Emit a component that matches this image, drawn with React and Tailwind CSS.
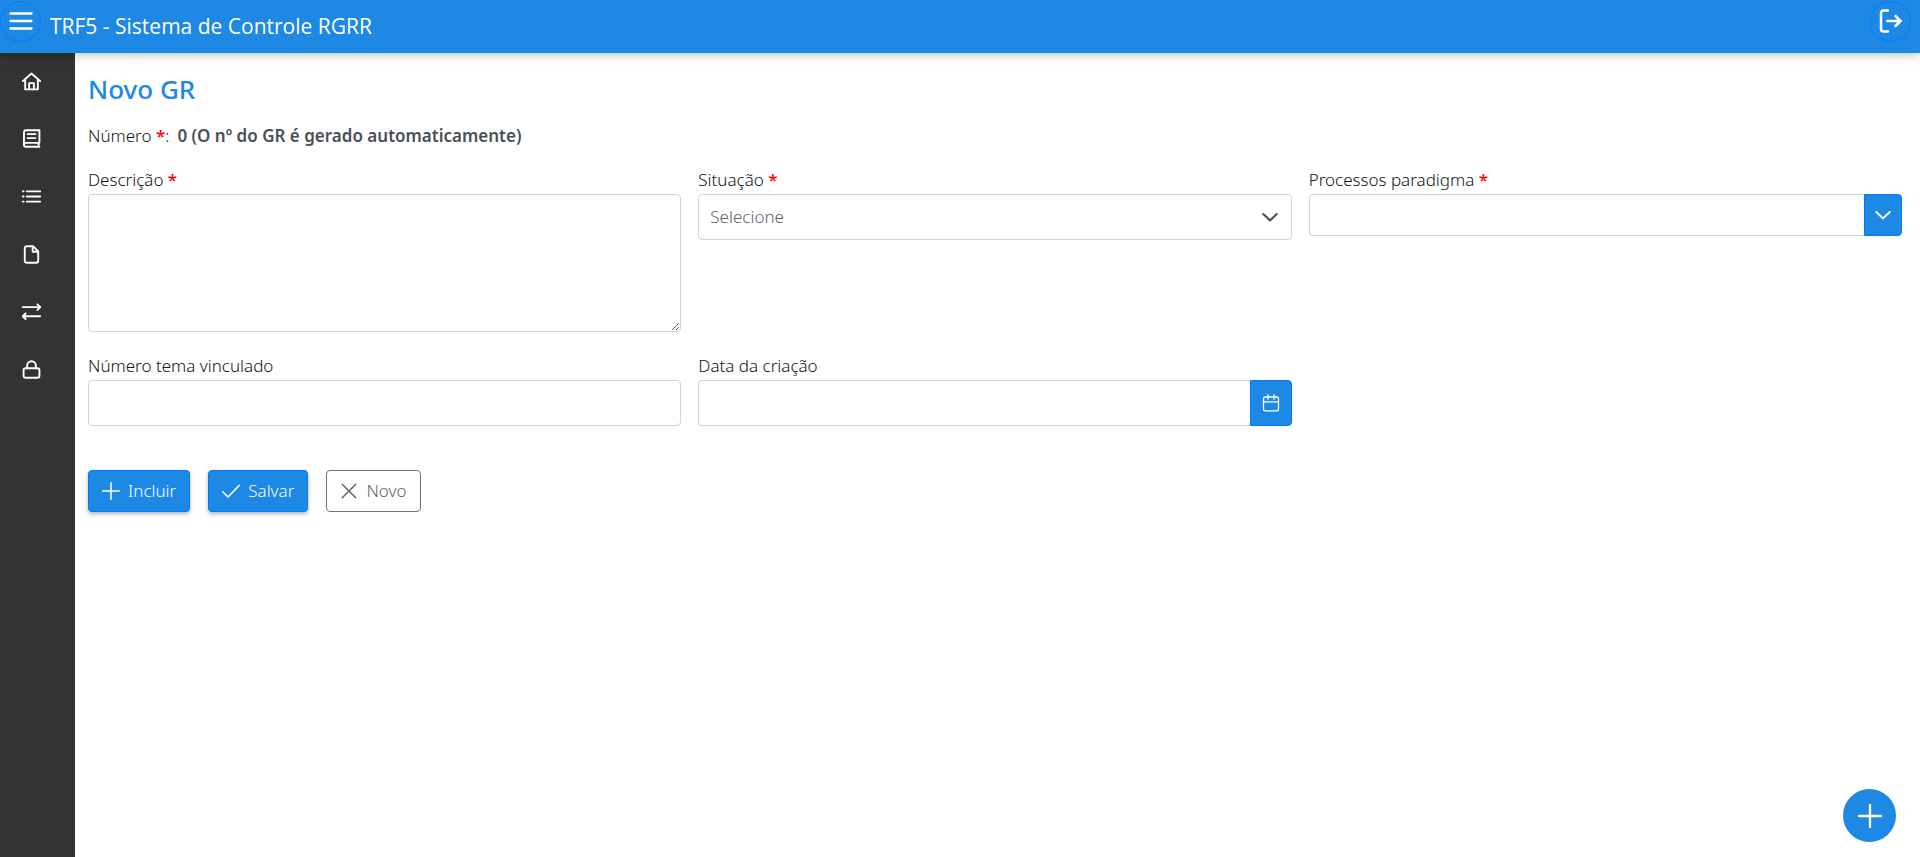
import { useState } from 'react';
import clsx from 'clsx';

const ICONS = {
    bars: ['M1.5 4.5h21', 'M1.5 12h21', 'M1.5 19.5h21'],
    signOut: ['M10 1.5H5.5A2.5 2.5 0 0 0 3 4v16A2.5 2.5 0 0 0 5.5 22.5H10', 'M9.5 12h13', 'M17.5 7l5 5-5 5'],
    home: ['M1 11.5L12 2l11 9.5', 'M4 9.5V22h16V9.5', 'M9 22v-8h6v8'],
    book: ['M22 17.5V1.5H5A2.5 2.5 0 0 0 2.5 4v16A2.5 2.5 0 0 0 5 22.5h17', 'M2.5 19.5A2 2 0 0 1 4.5 17.5H21V22', 'M7 6.5h10', 'M7 11.5h10'],
    list: ['M6 5.5h17', 'M6 12h17', 'M6 18.5h17', 'M1 5.5h1', 'M1 12h1', 'M1 18.5h1'],
    file: ['M14 1.5H6A2.5 2.5 0 0 0 3.5 4v16A2.5 2.5 0 0 0 6 22.5h12a2.5 2.5 0 0 0 2.5-2.5V8z', 'M13.5 2v6.5h6.5'],
    exchange: ['M1 6.5h22', 'M19.5 3L23 6.5l-3.5 3.5', 'M23 18H1', 'M4.5 14.5L1 18l3.5 3.5'],
    lock: ['M4.5 10.5h15a2.5 2.5 0 0 1 2.5 2.5v7a2.5 2.5 0 0 1-2.5 2.5h-15A2.5 2.5 0 0 1 2 20v-7a2.5 2.5 0 0 1 2.5-2.5z', 'M6.5 10.5V7a5.5 5.5 0 0 1 11 0v3.5'],
    chevron: ['M3 8l9 8.5L21 8'],
    calendar: ['M4.5 4h15A2.5 2.5 0 0 1 22 6.5V20a2.5 2.5 0 0 1-2.5 2.5h-15A2.5 2.5 0 0 1 2 20V6.5A2.5 2.5 0 0 1 4.5 4z', 'M2 10.5h20', 'M8 1v6', 'M16 1v6'],
    plus: ['M12 1v22', 'M1 12h22'],
    check: ['M1 13l7 7L23 4.5'],
    times: ['M3 3l18 18', 'M21 3L3 21']
};

const MENU = [
    { icon: 'home', label: 'Início' },
    { icon: 'book', label: 'Cadastros' },
    { icon: 'list', label: 'Listas' },
    { icon: 'file', label: 'Documentos' },
    { icon: 'exchange', label: 'Movimentações' },
    { icon: 'lock', label: 'Segurança' }
];

function Icon({ name, className, stroke = 2 }) {
    return (
        <svg
            viewBox="0 0 24 24"
            fill="none"
            stroke="currentColor"
            strokeWidth={stroke}
            strokeLinecap="round"
            strokeLinejoin="round"
            className={clsx('shrink-0', className)}
            aria-hidden="true"
        >
            {ICONS[name].map((d) => (
                <path key={d} d={d} />
            ))}
        </svg>
    );
}

function Field({ id, label, required, children }) {
    return (
        <div>
            <label htmlFor={id} className="block h-[26px] leading-6">
                {label} {required && <span className="font-medium text-[#ff0000]">*</span>}
            </label>
            {children}
        </div>
    );
}

const inputClass = 'block w-full min-w-0 rounded border border-[#ced4da] bg-white px-[11px] outline-none focus:border-[#1e88e5]';
const addonClass = 'flex shrink-0 items-center justify-center rounded-r border border-[#007bff] bg-[#1e88e5] text-white';
const buttonClass = 'flex h-[42px] items-center gap-2 rounded border px-[13px]';
const primaryClass = 'border-[#007bff] bg-[#1e88e5] text-white shadow-[0_2px_4px_rgba(0,0,0,0.3)]';

export default function App() {
    const [form, setForm] = useState({ descricao: '', situacao: '', processos: '', tema: '', data: '' });

    const bind = (name) => ({
        id: name,
        value: form[name],
        onChange: (e) => setForm((prev) => ({ ...prev, [name]: e.target.value }))
    });

    return (
        <div className="flex min-h-screen flex-col bg-white font-['Noto_Sans',sans-serif] text-[17px] font-light text-[#111417]">
            {/* Topbar */}
            <header className="z-10 flex h-[53px] items-start bg-[#1e88e5] pt-px pr-[9px] text-white shadow-[0_2px_10px_rgba(0,0,0,0.25)]">
                <button className="flex size-[41px] items-center justify-center rounded-full border border-[#007bff] pb-0.5" aria-label="Menu">
                    <Icon name="bars" stroke={2.3} className="size-6" />
                </button>
                <span className="ml-[9px] flex-1 self-center font-['Open_Sans',sans-serif] text-[21px] font-normal">TRF5 - Sistema de Controle RGRR</span>
                <button className="flex size-[41px] items-center justify-center rounded-full border border-[#007bff] pr-0.5 pb-0.5" aria-label="Sair">
                    <Icon name="signOut" stroke={2.5} className="size-6" />
                </button>
            </header>

            <div className="flex flex-1">
                {/* Sidebar */}
                <nav className="w-[75px] shrink-0 bg-[#333333] text-white">
                    <ul className="grid h-[346px] grid-rows-6">
                        {MENU.map((item) => (
                            <li key={item.icon}>
                                <a href="#" aria-label={item.label} className="flex h-full items-center pb-px pl-[22px]">
                                    <Icon name={item.icon} stroke={2.4} className="size-[19px]" />
                                </a>
                            </li>
                        ))}
                    </ul>
                </nav>

                {/* Form */}
                <main className="min-w-0 flex-1 pt-5 pr-[18px] pl-[13px]">
                    <h1 className="text-[26px] leading-8 font-medium text-[#1e88e5]">Novo GR</h1>
                    <p className="mt-[19px] leading-6">
                        Número <span className="font-medium text-[#ff0000]">*</span>:
                        <strong className="ml-2 font-semibold text-[#495057]">0 (O nº do GR é gerado automaticamente)</strong>
                    </p>

                    <div className="mt-5 grid grid-cols-3 items-start gap-x-[17px] gap-y-[22px]">
                        <Field id="descricao" label="Descrição" required>
                            <textarea {...bind('descricao')} className={clsx(inputClass, 'h-[138px] py-2 text-[#495057]')} />
                        </Field>

                        <Field id="situacao" label="Situação" required>
                            <div className="relative">
                                <select {...bind('situacao')} className={clsx(inputClass, 'h-[46px] appearance-none text-[#5c646c]')}>
                                    <option value="">Selecione</option>
                                    <option value="ativo">Ativo</option>
                                    <option value="inativo">Inativo</option>
                                </select>
                                <Icon name="chevron" stroke={2.8} className="pointer-events-none absolute top-3.5 right-[13px] size-[18px] text-[#495057]" />
                            </div>
                        </Field>

                        <Field id="processos" label="Processos paradigma" required>
                            <div className="flex">
                                <input type="text" {...bind('processos')} className={clsx(inputClass, 'h-[42px] rounded-r-none border-r-0 text-[#495057]')} />
                                <button className={clsx(addonClass, 'w-[38px]')} aria-label="Abrir processos">
                                    <Icon name="chevron" stroke={2.6} className="size-[18px]" />
                                </button>
                            </div>
                        </Field>

                        <Field id="tema" label="Número tema vinculado">
                            <input type="text" {...bind('tema')} className={clsx(inputClass, 'h-[46px] text-[#495057]')} />
                        </Field>

                        <Field id="data" label="Data da criação">
                            <div className="flex">
                                <input type="text" {...bind('data')} className={clsx(inputClass, 'h-[46px] rounded-r-none border-r-0 text-[#495057]')} />
                                <button className={clsx(addonClass, 'w-[42px]')} aria-label="Abrir calendário">
                                    <Icon name="calendar" stroke={1.7} className="size-[18px]" />
                                </button>
                            </div>
                        </Field>
                    </div>

                    <div className="mt-11 flex gap-[18px]">
                        <button className={clsx(buttonClass, primaryClass)}>
                            <Icon name="plus" className="size-[18px]" />
                            Incluir
                        </button>
                        <button className={clsx(buttonClass, primaryClass)}>
                            <Icon name="check" className="size-[18px]" />
                            Salvar
                        </button>
                        <button className={clsx(buttonClass, 'border-[#6c757d] bg-white text-[#5c646c]')}>
                            <Icon name="times" className="size-[18px]" />
                            Novo
                        </button>
                    </div>
                </main>
            </div>

            {/* Floating action */}
            <button
                className="fixed right-6 bottom-[15px] flex size-[53px] items-center justify-center rounded-full bg-[#1e88e5] text-white"
                aria-label="Adicionar"
            >
                <Icon name="plus" stroke={2.3} className="size-6" />
            </button>
        </div>
    );
}
